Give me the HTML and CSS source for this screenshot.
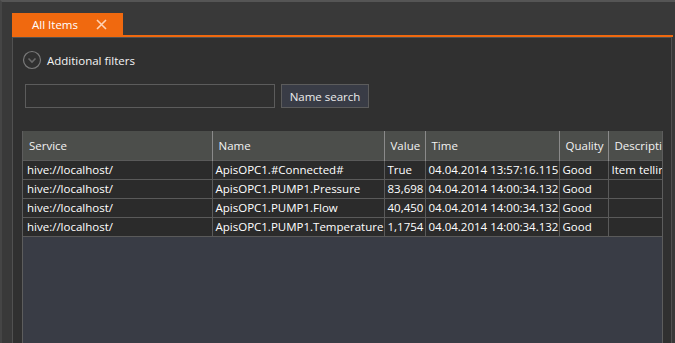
FILE: index.html
```html
<!DOCTYPE html>
<html lang="en">
<head>
    <meta charset="UTF-8">
    <title>All Items</title>
    <link rel="stylesheet" href="styles.css">
</head>
<body>

<div class="window">
    <div class="tabbar">
        <div class="tab">
            <span class="tab-title">All Items</span>
            <svg class="tab-close" width="11" height="11" viewBox="0 0 11 11">
                <path d="M1 1 L10 10 M10 1 L1 10" stroke="#ffd3b5" stroke-width="1.6" fill="none"/>
            </svg>
        </div>
    </div>
    <div class="tabline"></div>

    <div class="panel">
        <div class="filters">
            <svg class="expander" width="20" height="20" viewBox="0 0 20 20">
                <circle cx="10" cy="10" r="8.5" stroke="#7a7a7a" stroke-width="1.2" fill="none"/>
                <path d="M6.5 8.5 L10 12 L13.5 8.5" stroke="#6a6a6a" stroke-width="1.6" fill="none"/>
            </svg>
            <span>Additional filters</span>
        </div>

        <div class="search">
            <input type="text" class="search-box">
            <button class="search-btn">Name search</button>
        </div>

        <div class="grid">
            <table>
                <colgroup>
                    <col class="c-service">
                    <col class="c-name">
                    <col class="c-value">
                    <col class="c-time">
                    <col class="c-quality">
                    <col class="c-desc">
                </colgroup>
                <thead>
                    <tr>
                        <th>Service</th>
                        <th>Name</th>
                        <th>Value</th>
                        <th>Time</th>
                        <th>Quality</th>
                        <th>Description</th>
                    </tr>
                </thead>
                <tbody>
                    <tr>
                        <td>hive://localhost/</td>
                        <td>ApisOPC1.#Connected#</td>
                        <td>True</td>
                        <td>04.04.2014 13:57:16.115</td>
                        <td>Good</td>
                        <td>Item telling if connected</td>
                    </tr>
                    <tr>
                        <td>hive://localhost/</td>
                        <td>ApisOPC1.PUMP1.Pressure</td>
                        <td>83,698</td>
                        <td>04.04.2014 14:00:34.132</td>
                        <td>Good</td>
                        <td></td>
                    </tr>
                    <tr>
                        <td>hive://localhost/</td>
                        <td>ApisOPC1.PUMP1.Flow</td>
                        <td>40,450</td>
                        <td>04.04.2014 14:00:34.132</td>
                        <td>Good</td>
                        <td></td>
                    </tr>
                    <tr>
                        <td>hive://localhost/</td>
                        <td>ApisOPC1.PUMP1.Temperature</td>
                        <td>1,1754</td>
                        <td>04.04.2014 14:00:34.132</td>
                        <td>Good</td>
                        <td></td>
                    </tr>
                </tbody>
            </table>
            <div class="grid-empty"></div>
        </div>
    </div>
</div>

</body>
</html>
```

FILE: styles.css
```css
* {
    box-sizing: border-box;
    font-family: "Open Sans", "Noto Sans", sans-serif;
}
body {
    margin: 0;
    width: 675px;
    height: 343px;
    overflow: hidden;
    background: #393939;
}
.window {
    height: 343px;
    border-top: 2px solid #555555;
    border-left: 2px solid #454545;
    display: flex;
    flex-direction: column;
}
.tabbar {
    display: flex;
    padding: 11px 0 0 10px;
}
.tab {
    display: flex;
    align-items: center;
    width: 111px;
    height: 22px;
    background: #f0690f;
    padding-left: 20px;
}
.tab-title {
    color: #ffffff;
    font-size: 11.5px;
    width: 64px;
}
.tab-close {
    display: block;
}
.tabline {
    height: 2px;
    margin: 0 2px 0 10px;
    background: #f0690f;
}
.panel {
    flex: 1;
    margin: 0 3px 0 10px;
    background: #303030;
    border: 1px solid #515151;
    border-bottom: none;
    padding: 12px 9px 0 9px;
    display: flex;
    flex-direction: column;
    min-height: 0;
}
.filters {
    display: flex;
    align-items: center;
    gap: 5px;
    color: #f4f4f4;
    font-size: 11.5px;
    height: 20px;
}
.search {
    display: flex;
    gap: 6px;
    margin: 14px 0 0 3px;
}
.search-box {
    width: 250px;
    height: 24px;
    background: #303030;
    border: 1px solid #5c5c5c;
    outline: none;
}
.search-btn {
    width: 88px;
    height: 24px;
    background: #393c46;
    border: 1px solid #5c5c5c;
    color: #ececec;
    font-size: 11.5px;
    padding: 0;
}
.grid {
    flex: 1;
    margin-top: 23px;
    width: 641px;
    background: #393c45;
    border-left: 1px solid #5d5d5d;
    border-right: 1px solid #5d5d5d;
    overflow: hidden;
}
table {
    border-collapse: collapse;
    table-layout: fixed;
    width: 640px;
    font-size: 11.5px;
    color: #ffffff;
}
.c-service { width: 189px; }
.c-name { width: 172px; }
.c-value { width: 41px; }
.c-time { width: 134px; }
.c-quality { width: 49px; }
.c-desc { width: 55px; }
th {
    height: 29px;
    background: #4c4e4b;
    text-align: left;
    font-weight: normal;
    color: #f2f2f2;
    padding: 0 0 0 6px;
    border-left: 1px solid #8a8a8a;
    white-space: nowrap;
    overflow: hidden;
}
th:first-child {
    border-left: none;
}
td {
    height: 19px;
    background: #2b2b2b;
    padding: 0 0 0 3px;
    border-top: 1px solid #5a5a5a;
    border-left: 1px solid #5a5a5a;
    white-space: nowrap;
    overflow: hidden;
}
td:first-child {
    border-left: none;
    padding-left: 4px;
}
tbody tr:last-child td {
    border-bottom: 1px solid #5a5a5a;
}
```
